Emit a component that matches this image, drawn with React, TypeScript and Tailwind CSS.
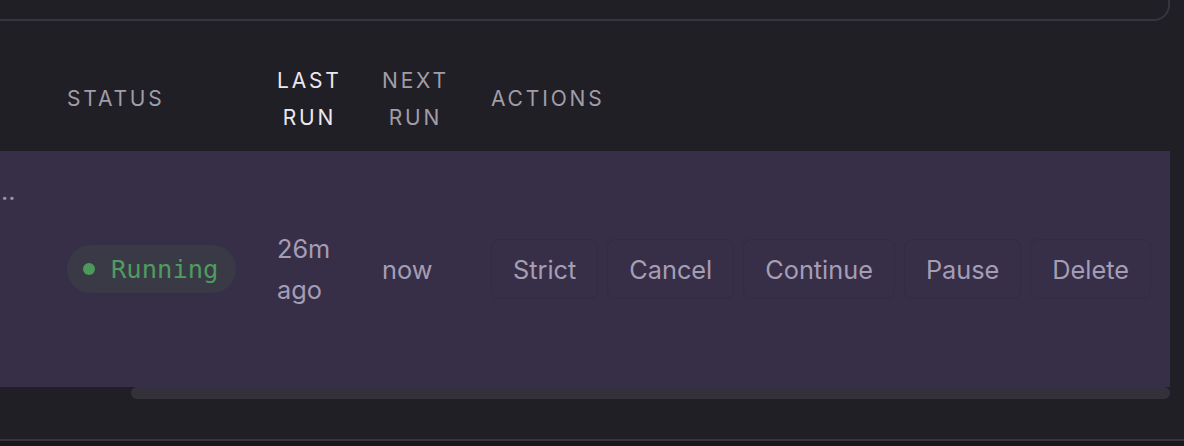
import React from "react";

const actions = ["Strict", "Cancel", "Continue", "Pause", "Delete"];

const sans = { fontFamily: "Inter, 'Noto Sans', sans-serif" };

export default function App() {
  return (
    <div
      className="flex h-[446px] w-[1184px] flex-col overflow-hidden bg-[#211f26]"
      style={sans}
    >
      {/* bottom edge of the card above */}
      <div className="mr-[14px] h-[21px] shrink-0 rounded-br-[16px] border-b-2 border-r-2 border-[#37343f]" />

      <div className="w-[1170px] shrink-0 overflow-hidden">
        {/* header */}
        <div className="flex h-[130px] items-center pt-[25px] text-[21px] uppercase leading-[37px] tracking-[0.135em] text-[#a19da8]">
          <div className="w-[46px] shrink-0" />
          <div className="w-[210px] shrink-0 px-[21px]">Status</div>
          <div className="w-[105px] shrink-0 pl-[21px] text-[#ebe8ef]">
            <div className="inline-block text-center">
              Last
              <br />
              Run
            </div>
          </div>
          <div className="w-[109px] shrink-0 pl-[21px]">
            <div className="inline-block text-center">
              Next
              <br />
              Run
            </div>
          </div>
          <div className="shrink-0 px-[21px]">Actions</div>
        </div>

        {/* row */}
        <div className="flex h-[236px] items-center bg-[#372f48] text-[25.3px] leading-[41px] text-[#a59db4]">
          <div className="w-[46px] shrink-0 self-start pt-[19px] pl-[1px] text-[#9b94a6]">..</div>
          <div className="w-[210px] shrink-0 px-[21px]">
            <span className="inline-flex h-[48px] items-center gap-[16px] rounded-full bg-[#3a3a47] pl-[16px] pr-[18px]">
              <span className="h-[12px] w-[12px] rounded-full bg-[#4c9a5b]" />
              <span
                className="text-[25.5px] text-[#4e9c5e]"
                style={{ fontFamily: "'DejaVu Sans Mono', monospace" }}
              >
                Running
              </span>
            </span>
          </div>
          <div className="w-[105px] shrink-0 px-[21px]">
            26m
            <br />
            ago
          </div>
          <div className="w-[109px] shrink-0 px-[21px]">now</div>
          <div className="flex shrink-0 gap-[9px] px-[21px]">
            {actions.map((a) => (
              <button
                key={a}
                className="h-[60px] shrink-0 rounded-[8px] border border-[#332b43] px-[21px] leading-[41px]"
              >
                {a}
              </button>
            ))}
          </div>
        </div>

        {/* scrollbar */}
        <div className="ml-[131px] h-[12px] rounded-full bg-[#34313b]" />
      </div>

      <div className="flex-1" />
      <div className="h-[2px] shrink-0 bg-[#37343d]" />
      <div className="h-[5px] shrink-0 bg-[#19171c]" />
    </div>
  );
}
